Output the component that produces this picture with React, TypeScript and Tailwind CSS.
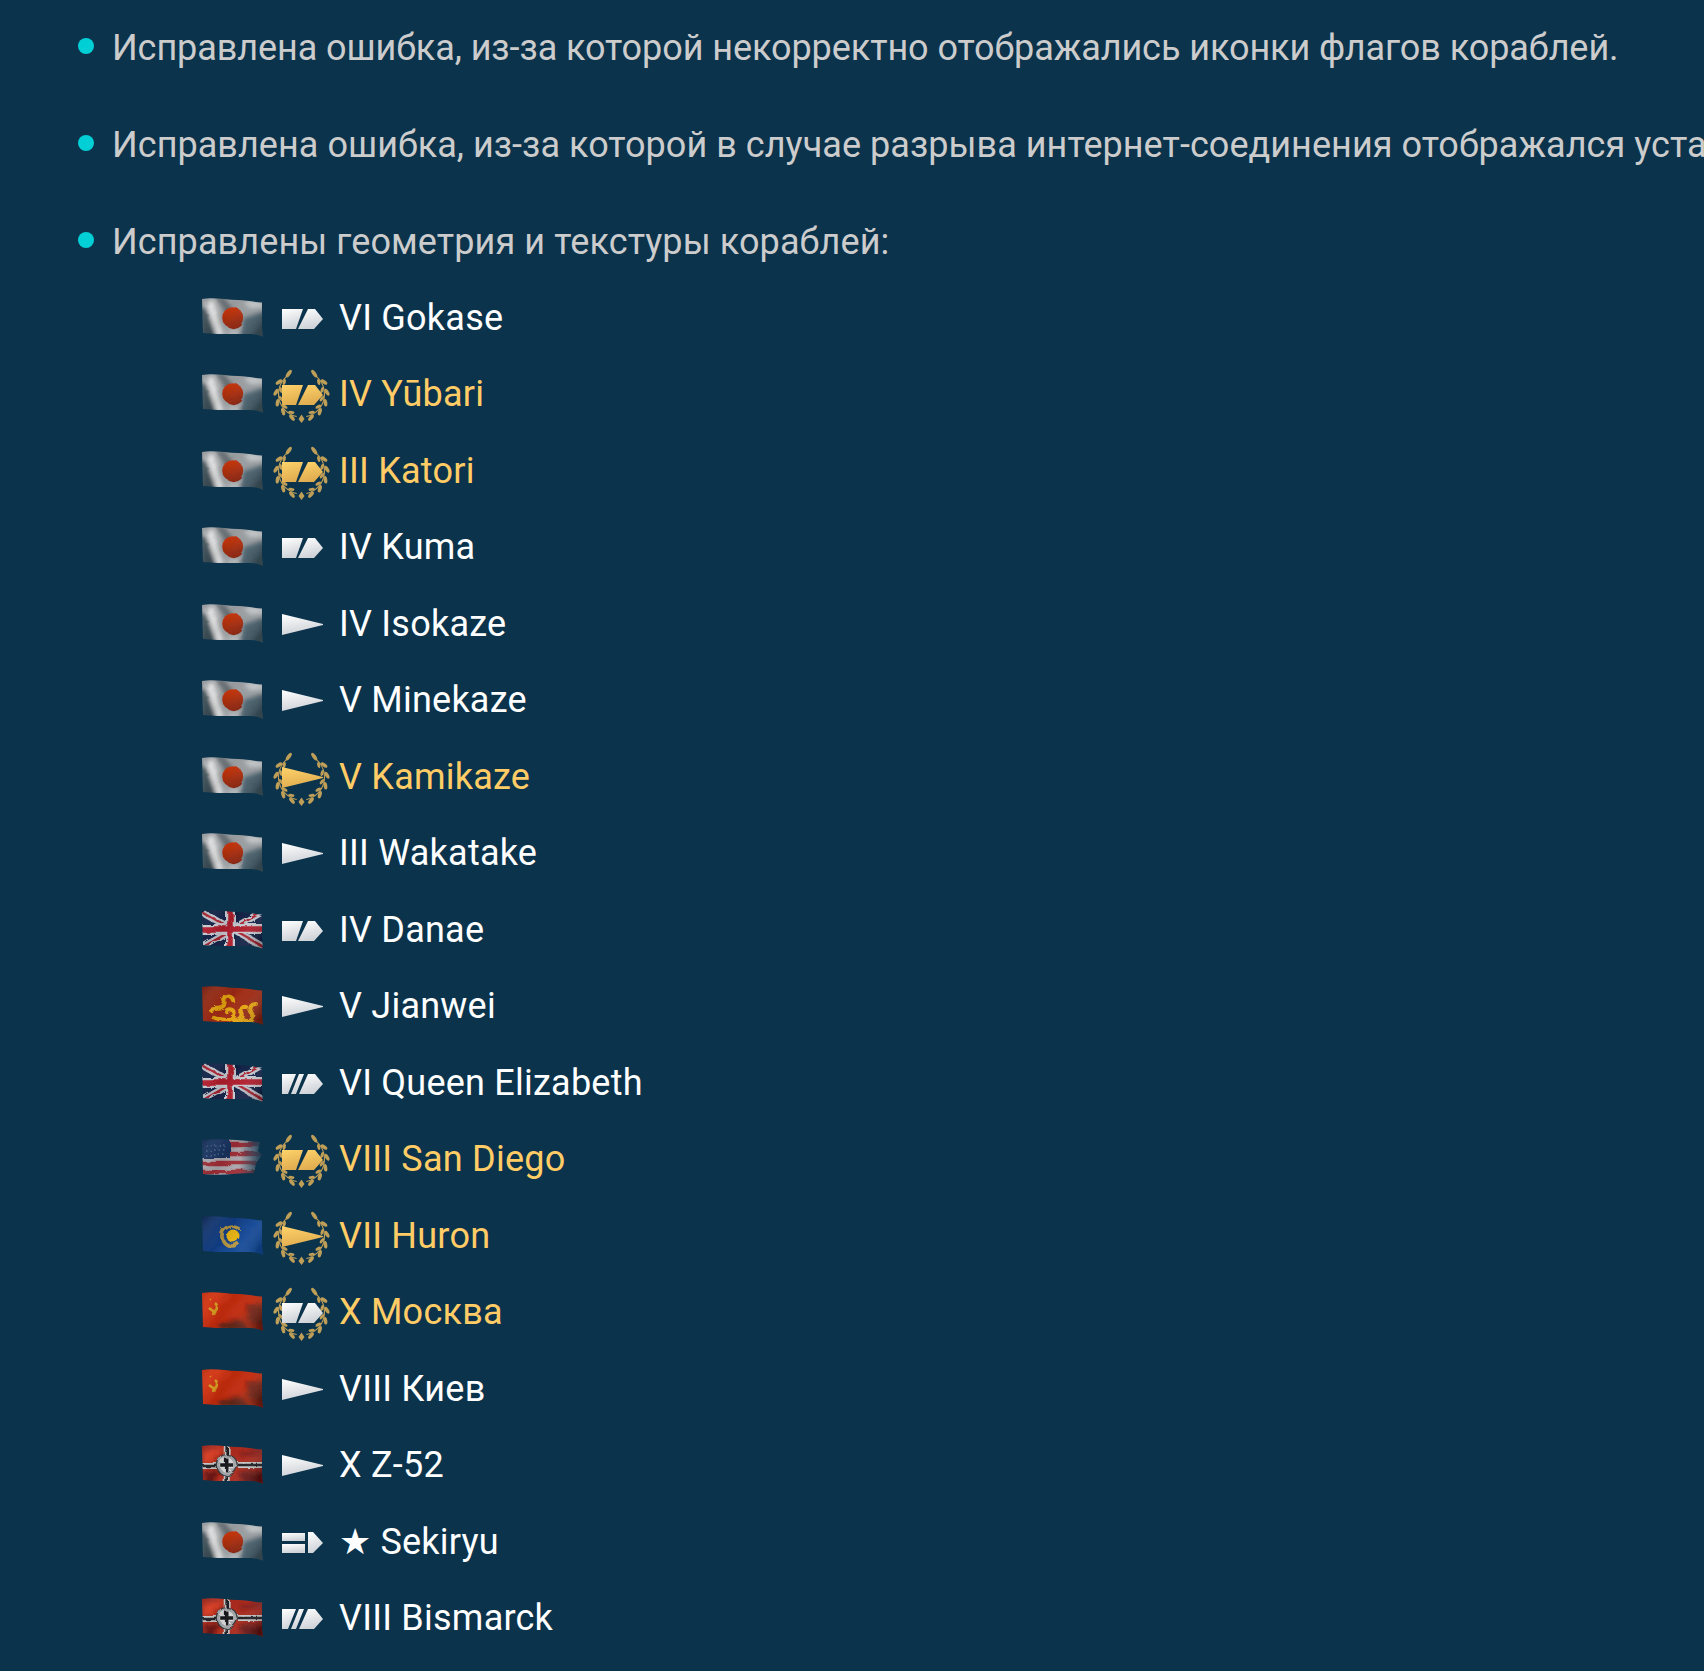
const NOTES = [
  { text: "Исправлена ошибка, из-за которой некорректно отображались иконки флагов кораблей.", tracking: "tracking-[-0.07px]" },
  { text: "Исправлена ошибка, из-за которой в случае разрыва интернет-соединения отображался устаревший статус сервера.", tracking: "tracking-[0.05px]" },
  { text: "Исправлены геометрия и текстуры кораблей:", tracking: "tracking-[0.1px]" },
];

type Nation = "jp" | "uk" | "pc" | "us" | "pa" | "su" | "de";
type Kind = "cruiser" | "destroyer" | "battleship" | "carrier";

const SHIPS: { nation: Nation; kind: Kind; name: string; premium?: boolean }[] = [
  { nation: "jp", kind: "cruiser", name: "VI Gokase" },
  { nation: "jp", kind: "cruiser", name: "IV Yūbari", premium: true },
  { nation: "jp", kind: "cruiser", name: "III Katori", premium: true },
  { nation: "jp", kind: "cruiser", name: "IV Kuma" },
  { nation: "jp", kind: "destroyer", name: "IV Isokaze" },
  { nation: "jp", kind: "destroyer", name: "V Minekaze" },
  { nation: "jp", kind: "destroyer", name: "V Kamikaze", premium: true },
  { nation: "jp", kind: "destroyer", name: "III Wakatake" },
  { nation: "uk", kind: "cruiser", name: "IV Danae" },
  { nation: "pc", kind: "destroyer", name: "V Jianwei" },
  { nation: "uk", kind: "battleship", name: "VI Queen Elizabeth" },
  { nation: "us", kind: "cruiser", name: "VIII San Diego", premium: true },
  { nation: "pa", kind: "destroyer", name: "VII Huron", premium: true },
  { nation: "su", kind: "cruiser", name: "X Москва", premium: true },
  { nation: "su", kind: "destroyer", name: "VIII Киев" },
  { nation: "de", kind: "destroyer", name: "X Z-52" },
  { nation: "jp", kind: "carrier", name: "★ Sekiryu" },
  { nation: "de", kind: "battleship", name: "VIII Bismarck" },
];

/* ---------- Flags ---------- */
function FlagArt({ nation }: { nation: Nation }) {
  if (nation === "jp") {
    return (
      <>
        <rect x="-2" y="-2" width="68" height="46" fill="url(#jp-cloth)" />
        <g filter="url(#smear)">
          <path d="M4 3 L10 2 L22 38 L15 38 Z" fill="#f2f2f2" opacity="0.85" />
          <path d="M-2 10 L4 10 L15 42 L-2 42 Z" fill="#34464f" opacity="0.95" />
          <path d="M12 -2 L22 -2 L32 14 L24 16 Z" fill="#535c62" opacity="0.75" />
          <path d="M44 2 L62 4 L62 11 L46 10 Z" fill="#e4e6e6" opacity="0.55" />
          <path d="M42 20 L64 14 L64 42 L38 42 Z" fill="#3f5866" opacity="0.95" />
          <path d="M24 31 L36 30 L38 40 L26 40 Z" fill="#d8dada" opacity="0.45" />
        </g>
        <circle cx="30.7" cy="19.7" r="10.5" fill="url(#jp-sun)" />
      </>
    );
  }
  if (nation === "uk") {
    return (
      <>
        <rect x="-2" y="-2" width="68" height="46" fill="#0f2045" />
        <path d="M0 2 L60 36 M60 2 L0 36" stroke="#bfc0c8" strokeWidth="7" />
        <path d="M0 2 L60 36 M60 2 L0 36" stroke="#a8222f" strokeWidth="2.4" />
        <path d="M28 -2 V42 M-2 19 H64" stroke="#c6c7ce" strokeWidth="10" />
        <path d="M28 -2 V42 M-2 19 H64" stroke="#b01c2b" strokeWidth="5.5" />
      </>
    );
  }
  if (nation === "pc") {
    return (
      <>
        <rect x="-2" y="-2" width="68" height="46" fill="url(#pc-cloth)" />
        <g fill="none" stroke="#e3a30e" strokeWidth="4.2" strokeLinecap="round" strokeLinejoin="round">
          <path d="M8 23 C14 20 19 24 22 19 C24 15 20 11 24 10 C27 9 30 11 31 14" />
          <path d="M11 31 C18 34 28 36 32 30 C35 25 27 21 24 25" />
          <path d="M32 34 C38 36 42 32 40 27 C38 23 41 20 44 21" />
          <path d="M43 34 C50 35 52 30 49 26 C47 22 49 18 54 18" />
        </g>
      </>
    );
  }
  if (nation === "us") {
    return (
      <>
        <rect x="-2" y="-2" width="66" height="46" fill="#aaa5ab" />
        <path d="M-2 5 H64 M-2 15 H64 M-2 24 H64 M-2 33 H64" stroke="#9e2c35" strokeWidth="4.6" />
        <rect x="-2" y="-2" width="30" height="21" fill="#16305c" />
        <path d="M3 6 H25 M3 11 H25 M3 16 H25" stroke="#5f77a2" strokeWidth="1.2" strokeDasharray="1.5 3" />
        <rect x="38" y="-2" width="26" height="46" fill="url(#fade)" />
      </>
    );
  }
  if (nation === "pa") {
    return (
      <>
        <rect x="-2" y="-2" width="68" height="46" fill="url(#pa-cloth)" />
        <path d="M37 13 A 10 10 0 1 0 37 27" fill="none" stroke="#b59540" strokeWidth="3.6" />
        <circle cx="31" cy="20" r="6.5" fill="#e7b30f" />
      </>
    );
  }
  if (nation === "su") {
    return (
      <>
        <rect x="-2" y="-2" width="68" height="46" fill="url(#su-cloth)" />
        <g filter="url(#smear)">
          <ellipse cx="30" cy="34" rx="14" ry="5" fill="#3d1514" opacity="0.8" />
          <path d="M44 14 L62 12 L62 34 L48 30 Z" fill="#5a1812" opacity="0.7" />
        </g>
        <path d="M6 15 L14 21 M13 11 C17 14 15 20 9 21" stroke="#d49a1c" strokeWidth="2.6" fill="none" />
        <circle cx="8" cy="7" r="1.3" fill="#d49a1c" />
      </>
    );
  }
  return (
    <>
      <rect x="-2" y="-2" width="68" height="46" fill="url(#de-cloth)" />
      <g filter="url(#smear)">
        <path d="M0 6 L22 2 L10 16 L0 16 Z" fill="#e0391c" opacity="0.75" />
        <path d="M36 6 L62 4 L62 9 L40 12 Z" fill="#6e1510" opacity="0.7" />
        <path d="M2 26 L16 24 L12 38 L2 38 Z" fill="#5c120e" opacity="0.8" />
        <path d="M38 28 L62 26 L62 38 L40 38 Z" fill="#5c120e" opacity="0.85" />
      </g>
      <path d="M24.7 -2 V42 M-2 20 H64" stroke="#c4c4c4" strokeWidth="6" />
      <path d="M24.7 -2 V42 M-2 20 H64" stroke="#1d1d22" strokeWidth="2.6" />
      <circle cx="24.7" cy="20" r="10.5" fill="#a7abae" stroke="#34363a" strokeWidth="1.2" />
      <circle cx="24.7" cy="20" r="7.2" fill="#e0e0e0" />
      <path d="M24.7 13.5 V26.5 M18.2 20 H31.2" stroke="#18181c" strokeWidth="3.6" />
    </>
  );
}

function Flag({ nation }: { nation: Nation }) {
  const rough = nation !== "jp";
  return (
    <svg width="64" height="44" viewBox="0 0 64 44" className="shrink-0" aria-hidden="true">
      <g filter={rough ? "url(#wave-rough)" : "url(#wave)"} clipPath={nation === "us" ? "url(#cloth-us)" : "url(#cloth)"} transform="translate(1 2)">
        <FlagArt nation={nation} />
        <rect x="-2" y="-2" width="68" height="46" fill="url(#folds)" />
      </g>
    </svg>
  );
}

/* ---------- Ship class icons ---------- */
function Hull({ kind, gold }: { kind: Kind; gold: boolean }) {
  const fill = gold ? "url(#hull-gold)" : "url(#hull-white)";
  if (kind === "destroyer") return <path d="M0 0 L41 10 L41 11 L0 21 Z" fill={fill} />;
  if (kind === "cruiser") {
    return (
      <g fill={fill}>
        <path d="M0 1 H21 L14 21 H0 Z" />
        <path d="M16 21 L26 1 H33 L41 11 L32 21 Z" />
      </g>
    );
  }
  if (kind === "battleship") {
    return (
      <g fill={fill}>
        <path d="M0 1 H14 L6 21 H0 Z" />
        <path d="M9 21 L17 1 H22 L14 21 Z" />
        <path d="M17 21 L26 1 H33 L41 11 L32 21 Z" />
      </g>
    );
  }
  return (
    <g fill={fill}>
      <path d="M0 1 H23 V9 H0 Z" />
      <path d="M0 12 H23 V21 H0 Z" />
      <path d="M26 0 H31 L41 11 L31 21 H26 Z" />
    </g>
  );
}

const WREATH_CENTER = { x: 28.5, y: 24 };
const WREATH_ANGLES = [22, 46, 70, 94, 118];

function polar(r: number, deg: number) {
  const a = (deg * Math.PI) / 180;
  return { x: WREATH_CENTER.x - r * Math.sin(a), y: WREATH_CENTER.y + r * Math.cos(a) };
}

// a leaf lies along the stem and leans outward or inward, pointing to the open top
function Leaf({ r, deg, tilt, size }: { r: number; deg: number; tilt: number; size: number }) {
  const p = polar(r, deg);
  return <ellipse cx={p.x} cy={p.y} rx={size * 0.48} ry={size} transform={`rotate(${deg + 90 + tilt} ${p.x} ${p.y})`} />;
}

function Wreath() {
  const stemTop = polar(23, 140);
  const stemEnd = polar(23, 12);
  const tip = polar(24, 148);
  return (
    <g fill="#bf9f58" filter="url(#soft)">
      {[1, -1].map((side) => (
        <g key={side} transform={side === -1 ? "translate(57 0) scale(-1 1)" : undefined}>
          <path d={`M${stemTop.x} ${stemTop.y} A 23 23 0 0 0 ${stemEnd.x} ${stemEnd.y}`} fill="none" stroke="#bf9f58" strokeWidth="1.1" />
          <ellipse cx={tip.x} cy={tip.y} rx="1.9" ry="4.4" transform={`rotate(36 ${tip.x} ${tip.y})`} />
          {WREATH_ANGLES.map((deg) => (
            <g key={deg}>
              <Leaf r={25.5} deg={deg} tilt={28} size={3.8} />
              <Leaf r={21} deg={deg + 7} tilt={-24} size={3.1} />
            </g>
          ))}
        </g>
      ))}
      <path d="M28.5 44.5 L31.5 49 L28.5 53 L25.5 49 Z" />
    </g>
  );
}

function ShipIcon({ kind, premium, goldHull }: { kind: Kind; premium?: boolean; goldHull: boolean }) {
  return (
    <svg width="58" height="60" viewBox="0 0 58 60" className="shrink-0 overflow-visible" aria-hidden="true">
      {premium && (
        <g transform="translate(1 6)">
          <Wreath />
        </g>
      )}
      <g transform="translate(10 20)" filter="url(#soft)">
        <Hull kind={kind} gold={goldHull} />
      </g>
    </svg>
  );
}

function SharedDefs() {
  return (
    <svg width="0" height="0" className="block h-0 w-0" aria-hidden="true">
      <defs>
        <clipPath id="cloth">
          <path d="M0 1 C12 -1 24 2 36 2 C44 2 52 4 60 4.5 L60 26 C60 32 61 36 61 39 C54 35 44 36 30 36 C20 36 10 36 1 35 Z" />
        </clipPath>
        <clipPath id="cloth-us">
          <path d="M0 1 C18 -1 36 1 58 3 L56 12 L60 16 L54 25 L52 34 C36 34 18 37 1 35 Z" />
        </clipPath>
        <filter id="wave" x="-8%" y="-8%" width="116%" height="116%">
          <feTurbulence type="fractalNoise" baseFrequency="0.045 0.07" numOctaves="2" seed="4" result="n" />
          <feDisplacementMap in="SourceGraphic" in2="n" scale="3" />
          <feGaussianBlur stdDeviation="0.5" />
        </filter>
        <filter id="wave-rough" x="-8%" y="-8%" width="116%" height="116%">
          <feTurbulence type="fractalNoise" baseFrequency="0.05 0.09" numOctaves="2" seed="9" result="n" />
          <feDisplacementMap in="SourceGraphic" in2="n" scale="6" result="d" />
          <feTurbulence type="fractalNoise" baseFrequency="0.35" numOctaves="1" seed="2" result="m" />
          <feDisplacementMap in="d" in2="m" scale="2.5" />
          <feGaussianBlur stdDeviation="0.5" />
        </filter>
        <filter id="smear" x="-30%" y="-30%" width="160%" height="160%">
          <feGaussianBlur stdDeviation="2" />
        </filter>
        <filter id="soft" x="-10%" y="-10%" width="120%" height="120%">
          <feGaussianBlur stdDeviation="0.4" />
        </filter>
        <linearGradient id="folds" x1="0" y1="0" x2="1" y2="0.5">
          <stop offset="0" stopColor="#000" stopOpacity="0.15" />
          <stop offset="0.2" stopColor="#fff" stopOpacity="0.06" />
          <stop offset="0.45" stopColor="#000" stopOpacity="0.08" />
          <stop offset="0.7" stopColor="#fff" stopOpacity="0.04" />
          <stop offset="1" stopColor="#000" stopOpacity="0.25" />
        </linearGradient>
        <linearGradient id="fade">
          <stop offset="0" stopColor="#0b334c" stopOpacity="0" />
          <stop offset="0.85" stopColor="#0b334c" stopOpacity="1" />
        </linearGradient>
        <linearGradient id="jp-cloth" x1="0" y1="0" x2="1" y2="0.7">
          <stop offset="0" stopColor="#9a9ea1" />
          <stop offset="0.35" stopColor="#a8abad" />
          <stop offset="0.7" stopColor="#8e9498" />
          <stop offset="1" stopColor="#566c7a" />
        </linearGradient>
        <linearGradient id="jp-sun" x1="0.3" y1="0" x2="0.7" y2="1">
          <stop offset="0" stopColor="#d93a0b" />
          <stop offset="1" stopColor="#7c1f0c" />
        </linearGradient>
        <linearGradient id="pc-cloth" x1="0" y1="0" x2="1" y2="0.6">
          <stop offset="0" stopColor="#7d1f10" />
          <stop offset="0.5" stopColor="#a52c14" />
          <stop offset="1" stopColor="#8b2513" />
        </linearGradient>
        <linearGradient id="pa-cloth" x1="0" y1="0" x2="1" y2="0.6">
          <stop offset="0" stopColor="#0b2552" />
          <stop offset="0.45" stopColor="#113f88" />
          <stop offset="1" stopColor="#0f4da3" />
        </linearGradient>
        <linearGradient id="su-cloth" x1="0" y1="0" x2="1" y2="0.7">
          <stop offset="0" stopColor="#d8340f" />
          <stop offset="0.6" stopColor="#c2290c" />
          <stop offset="1" stopColor="#8a2210" />
        </linearGradient>
        <linearGradient id="de-cloth" x1="0" y1="0" x2="1" y2="0.4">
          <stop offset="0" stopColor="#a8261b" />
          <stop offset="0.5" stopColor="#b52c1d" />
          <stop offset="1" stopColor="#94221a" />
        </linearGradient>
        <linearGradient id="hull-white" x1="0" y1="0" x2="0.3" y2="1">
          <stop offset="0" stopColor="#ffffff" />
          <stop offset="1" stopColor="#cfd3d8" />
        </linearGradient>
        <linearGradient id="hull-gold" x1="0" y1="0" x2="0.3" y2="1">
          <stop offset="0" stopColor="#ffd36b" />
          <stop offset="1" stopColor="#e0ad50" />
        </linearGradient>
      </defs>
    </svg>
  );
}

export default function App() {
  return (
    <main className="h-[1671px] overflow-hidden bg-[#0b334c] font-['Roboto',sans-serif] text-[36px]">
      <SharedDefs />
      <ul className="flex flex-col gap-[37px] pt-4 pl-[78px]">
        {NOTES.map((note) => (
          <li key={note.text} className="flex h-[60px] items-center gap-[18px] whitespace-nowrap text-[#cccccc] leading-[60px]">
            <span className="h-4 w-4 shrink-0 rounded-full bg-[#00d0d6]" />
            <span className={`pt-[3px] ${note.tracking}`}>{note.text}</span>
          </li>
        ))}
      </ul>
      <ul className="mt-[9.5px] pl-[201px]">
        {SHIPS.map((ship) => (
          <li key={ship.name} className="flex h-[76.5px] items-center whitespace-nowrap">
            <Flag nation={ship.nation} />
            <span className="ml-[7px] mr-[9px] flex">
              <ShipIcon kind={ship.kind} premium={ship.premium} goldHull={ship.premium === true && ship.nation !== "su"} />
            </span>
            <span className={`tracking-[0.23px] ${ship.premium ? "text-[#ffcc66]" : "text-white"}`}>{ship.name}</span>
          </li>
        ))}
      </ul>
    </main>
  );
}
